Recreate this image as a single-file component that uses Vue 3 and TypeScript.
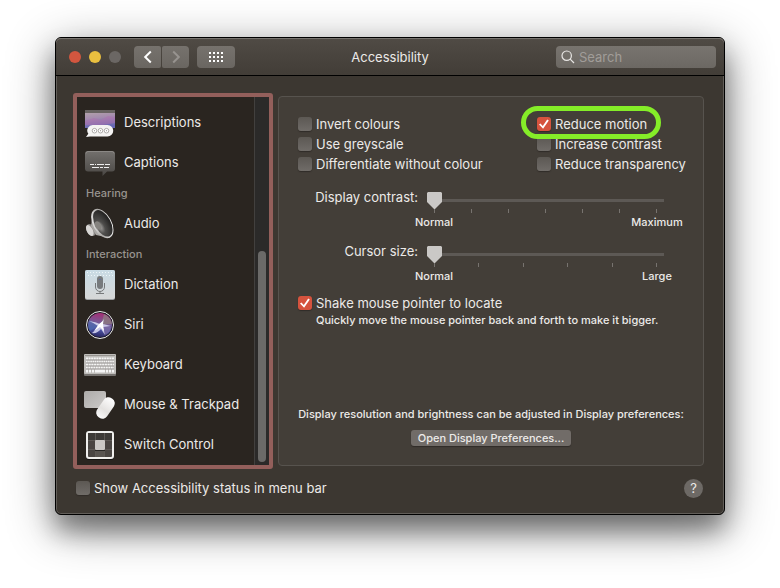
<script setup lang="ts">
import { ref } from 'vue'

interface SidebarEntry {
  kind: 'item' | 'heading'
  label: string
  icon?: string
}

interface Option {
  id: string
  label: string
  checked: boolean
  highlighted?: boolean
}

interface Slider {
  id: string
  label: string
  value: number
  steps: number
  low: string
  high: string
}

const sidebar: SidebarEntry[] = [
  { kind: 'item', label: 'Descriptions', icon: 'descriptions' },
  { kind: 'item', label: 'Captions', icon: 'captions' },
  { kind: 'heading', label: 'Hearing' },
  { kind: 'item', label: 'Audio', icon: 'audio' },
  { kind: 'heading', label: 'Interaction' },
  { kind: 'item', label: 'Dictation', icon: 'dictation' },
  { kind: 'item', label: 'Siri', icon: 'siri' },
  { kind: 'item', label: 'Keyboard', icon: 'keyboard' },
  { kind: 'item', label: 'Mouse & Trackpad', icon: 'mouse' },
  { kind: 'item', label: 'Switch Control', icon: 'switch' },
]

const optionColumns = ref<Option[][]>([
  [
    { id: 'invert', label: 'Invert colours', checked: false },
    { id: 'greyscale', label: 'Use greyscale', checked: false },
    { id: 'differentiate', label: 'Differentiate without colour', checked: false },
  ],
  [
    { id: 'motion', label: 'Reduce motion', checked: true, highlighted: true },
    { id: 'contrast', label: 'Increase contrast', checked: false },
    { id: 'transparency', label: 'Reduce transparency', checked: false },
  ],
])

const sliders = ref<Slider[]>([
  { id: 'display-contrast', label: 'Display contrast:', value: 0, steps: 7, low: 'Normal', high: 'Maximum' },
  { id: 'cursor-size', label: 'Cursor size:', value: 0, steps: 6, low: 'Normal', high: 'Large' },
])

const shake = ref(true)
const showStatus = ref(false)
const query = ref('')
</script>

<template>
  <div class="desktop">
    <main class="window">
      <header class="titlebar">
        <div class="lights">
          <button class="light close" aria-label="Close"></button>
          <button class="light minimise" aria-label="Minimise"></button>
          <button class="light zoom" aria-label="Zoom" disabled></button>
        </div>
        <nav class="nav">
          <button class="tool back" aria-label="Back">
            <svg width="10" height="14" viewBox="0 0 10 14"><path d="M7.800 1.500 2.200 7l5.600 5.500" /></svg>
          </button>
          <button class="tool forward" aria-label="Forward">
            <svg width="10" height="14" viewBox="0 0 10 14"><path d="M2.200 1.500 7.800 7l-5.600 5.500" /></svg>
          </button>
        </nav>
        <button class="tool all" aria-label="Show all">
          <svg width="14" height="10" viewBox="0 0 14 10">
            <template v-for="r in 3" :key="r">
              <rect v-for="c in 4" :key="c" :x="(c - 1) * 4" :y="(r - 1) * 4" width="2" height="2" />
            </template>
          </svg>
        </button>
        <h1 class="title">Accessibility</h1>
        <label class="search">
          <svg width="14" height="14" viewBox="0 0 14 14"><circle cx="5.700" cy="5.700" r="4.700" /><path d="m9.200 9.200 3.800 3.800" /></svg>
          <input v-model="query" type="search" placeholder="Search" aria-label="Search" />
        </label>
      </header>

      <div class="content">
        <aside class="sidebar">
          <ul class="entries">
            <li v-for="entry in sidebar" :key="entry.label" :class="entry.kind">
              <template v-if="entry.kind === 'heading'">{{ entry.label }}</template>
              <a v-else href="#">
                <svg class="icon" width="32" height="32" viewBox="0 0 32 32" aria-hidden="true">
                  <g v-if="entry.icon === 'descriptions'">
                    <defs>
                      <linearGradient id="sky" x1="0" y1="0" x2="0.200" y2="1">
                        <stop offset="0" stop-color="#b8aaa8" />
                        <stop offset="0.500" stop-color="#a48bae" />
                        <stop offset="1" stop-color="#6667b4" />
                      </linearGradient>
                    </defs>
                    <rect x="1" y="4" width="30" height="18" fill="url(#sky)" />
                    <rect x="1" y="4" width="30" height="3" fill="#686361" />
                    <path d="M1 15 10 12l7 2 7-4 7 1v6l-12 2H1z" fill="#b06fae" opacity="0.500" />
                    <path d="M9.500 19h14a5.500 5.500 0 0 1 0 11.500H6L2 31l2.300-3.200A5.600 5.600 0 0 1 9.500 19z" fill="#f4f3f2" />
                    <g fill="#fff" stroke="#9b9896" stroke-width="0.800"><circle cx="10.500" cy="24.700" r="2.300" /><circle cx="16.500" cy="24.700" r="2.300" /><circle cx="22.500" cy="24.700" r="2.300" /></g>
                    <g fill="#9b9896"><circle cx="10.500" cy="24.700" r="0.600" /><circle cx="16.500" cy="24.700" r="0.600" /><circle cx="22.500" cy="24.700" r="0.600" /></g>
                  </g>
                  <g v-else-if="entry.icon === 'captions'">
                    <defs>
                      <linearGradient id="bubble" x1="0" y1="0" x2="0" y2="1">
                        <stop offset="0" stop-color="#73706d" />
                        <stop offset="1" stop-color="#4a4744" />
                      </linearGradient>
                    </defs>
                    <path d="M4 5h24a3 3 0 0 1 3 3v14.500a3 3 0 0 1-3 3h-5L18.500 30v-4.500H4a3 3 0 0 1-3-3V8a3 3 0 0 1 3-3z" fill="url(#bubble)" />
                    <path d="M2 7.500Q2.300 5.500 4 5.500h24q1.700 0 2 2" fill="none" stroke="#8b8885" />
                    <path d="M6 18.500h20" stroke="#eee" stroke-dasharray="4 1 1 1 7 1 5" />
                    <path d="M8 21.500h17" stroke="#eee" stroke-dasharray="7 1 3 1 5" />
                  </g>
                  <g v-else-if="entry.icon === 'audio'">
                    <defs>
                      <linearGradient id="rim" x1="0" y1="0" x2="1" y2="0.600">
                        <stop offset="0" stop-color="#fff" />
                        <stop offset="0.500" stop-color="#aaa8a5" />
                        <stop offset="1" stop-color="#f4f4f4" />
                      </linearGradient>
                      <radialGradient id="cone" cx="0.250" cy="0.580" r="0.700">
                        <stop offset="0" stop-color="#a5a3a1" />
                        <stop offset="0.350" stop-color="#4f4e4c" />
                        <stop offset="1" stop-color="#252423" />
                      </radialGradient>
                    </defs>
                    <ellipse cx="7" cy="23" rx="4.300" ry="6.500" transform="rotate(-28 7 23)" fill="#85827f" />
                    <ellipse cx="5.800" cy="23.500" rx="3" ry="6" transform="rotate(-28 5.800 23.500)" fill="#d8d6d4" />
                    <path d="M9 6 7 19l5 9 14 3z" fill="#a9a7a4" />
                    <ellipse cx="18.300" cy="16.500" rx="9.200" ry="16" transform="rotate(-29 18.300 16.500)" fill="url(#rim)" />
                    <ellipse cx="18.800" cy="16.300" rx="7.800" ry="14.400" transform="rotate(-29 18.800 16.300)" fill="url(#cone)" />
                    <ellipse cx="14" cy="18.500" rx="3" ry="4.500" transform="rotate(-29 14 18.500)" fill="#85837f" />
                  </g>
                  <g v-else-if="entry.icon === 'dictation'">
                    <defs>
                      <linearGradient id="pad" x1="0" y1="0" x2="0" y2="1">
                        <stop offset="0" stop-color="#c9dbe5" />
                        <stop offset="1" stop-color="#d6d7d7" />
                      </linearGradient>
                    </defs>
                    <rect x="1" y="2" width="30" height="30" rx="2" fill="#9b9fa2" />
                    <rect x="1" y="2" width="30" height="29" rx="2" fill="url(#pad)" />
                    <path d="M3 4.500h26M4 7.500h25" stroke="#edf5f8" stroke-dasharray="1 2" />
                    <rect x="13" y="8" width="6" height="13" rx="3" fill="#777a7d" />
                    <path d="M11.500 15v4a4.500 4.500 0 0 0 9 0v-4M16 23.500v2.500M12 25.500h8" fill="none" stroke="#77797b" />
                    <rect x="15.500" y="11" width="1" height="1" fill="#4f63b9" />
                  </g>
                  <g v-else-if="entry.icon === 'siri'">
                    <defs>
                      <linearGradient id="orb" x1="0.500" y1="0" x2="0.350" y2="1">
                        <stop offset="0" stop-color="#a42d72" />
                        <stop offset="0.360" stop-color="#7a5694" />
                        <stop offset="0.700" stop-color="#4950a0" />
                        <stop offset="1" stop-color="#292660" />
                      </linearGradient>
                    </defs>
                    <circle cx="16" cy="17" r="13.500" fill="#181620" stroke="#ededed" />
                    <circle cx="16" cy="17" r="12" fill="url(#orb)" />
                    <path d="M17 17 20 6q7 3 8 10z" fill="#8c7b80" opacity="0.800" />
                    <path d="M16 17 5 12q-2 7 1 11z" fill="#4b78b8" opacity="0.500" />
                    <path d="M17 17l10 2q-1 6-6 8z" fill="#8a76aa" opacity="0.600" />
                    <path d="M5 13q7 1 11 3l4-5-1 5 8 2-8 1q1 4 2 8l-4-6q-4 5-9 4 4-3 6-7-4-3-9-5z" fill="#dcdcf4" opacity="0.850" />
                    <path d="M10 23l5-7 4-3v4l1 6-4-4z" fill="#fff" />
                  </g>
                  <g v-else-if="entry.icon === 'keyboard'">
                    <rect x="0" y="7" width="32" height="21" rx="1" fill="#777471" />
                    <rect x="0" y="6" width="32" height="20" rx="1" fill="#bfbdba" />
                    <path d="M1 7.500h30" stroke="#96938f" />
                    <g stroke="#f5f5f5" stroke-width="2">
                      <path d="M2 10.500h28" stroke-dasharray="2 0.600" />
                      <path d="M2 13.500h28" stroke-dasharray="1.500 0.700" />
                      <path d="M2 16.500h28" stroke-dasharray="2 0.700" />
                      <path d="M2 19.500h28" stroke-dasharray="1.700 0.800" />
                      <path d="M2 23h28" stroke-width="3" stroke-dasharray="2 1 2 1 2 1 10 1 2 1 2 1 2" />
                    </g>
                    <path d="M2 12h28M2 15h28M2 18h28M2 21h28" stroke="#85827f" stroke-width="0.600" />
                  </g>
                  <g v-else-if="entry.icon === 'mouse'">
                    <defs>
                      <linearGradient id="trackpad" x1="0" y1="0" x2="1" y2="1">
                        <stop offset="0" stop-color="#adaba9" />
                        <stop offset="1" stop-color="#cccac8" />
                      </linearGradient>
                      <linearGradient id="shell" x1="0" y1="0" x2="0" y2="1">
                        <stop offset="0" stop-color="#ffffff" />
                        <stop offset="0.600" stop-color="#e4e2e0" />
                        <stop offset="1" stop-color="#fafafa" />
                      </linearGradient>
                    </defs>
                    <rect x="0" y="3" width="22" height="17" rx="2" fill="url(#trackpad)" />
                    <rect x="15.500" y="8.500" width="12" height="23" rx="5.500" transform="rotate(34 21.500 20)" fill="url(#shell)" />
                  </g>
                  <g v-else>
                    <rect x="2" y="3" width="28" height="29" rx="3" fill="#141312" />
                    <rect x="3" y="4" width="26" height="26" rx="2" fill="#4a4643" stroke="#f0efed" stroke-width="2" />
                    <path d="M4 5h24v7H4z" fill="#3d3a37" />
                    <path d="M11.500 5v24M20.500 5v24M4 12.500h24M4 21.500h24" stroke="#5d5955" />
                    <path d="M12 22h8v7h-8z" fill="#595551" />
                    <rect x="11" y="13" width="10" height="10" fill="#2a2826" />
                    <rect x="11" y="12" width="10" height="10" rx="1" fill="#cbc9c6" />
                  </g>
                </svg>
                <span>{{ entry.label }}</span>
              </a>
            </li>
          </ul>
          <div class="scrollbar"><div class="scroll-thumb"></div></div>
        </aside>

        <section class="panel">
          <div class="options">
            <div v-for="(column, i) in optionColumns" :key="i" class="option-column">
              <label
                v-for="option in column"
                :key="option.id"
                class="check"
                :class="{ highlighted: option.highlighted }"
              >
                <input v-model="option.checked" type="checkbox" />
                <span>{{ option.label }}</span>
              </label>
            </div>
          </div>

          <div class="sliders">
            <div v-for="slider in sliders" :key="slider.id" class="slider-row">
              <label :for="slider.id">{{ slider.label }}</label>
              <div class="slider">
                <input :id="slider.id" v-model.number="slider.value" type="range" min="0" :max="slider.steps - 1" />
                <div class="ticks"><i v-for="n in slider.steps" :key="n"></i></div>
                <div class="range-labels">
                  <span>{{ slider.low }}</span>
                  <span>{{ slider.high }}</span>
                </div>
              </div>
            </div>
          </div>

          <div class="shake">
            <label class="check"><input v-model="shake" type="checkbox" /><span>Shake mouse pointer to locate</span></label>
            <p>Quickly move the mouse pointer back and forth to make it bigger.</p>
          </div>

          <div class="display-note">
            <p>Display resolution and brightness can be adjusted in Display preferences:</p>
            <button class="open">Open Display Preferences...</button>
          </div>
        </section>
      </div>

      <footer class="footer">
        <label class="check"><input v-model="showStatus" type="checkbox" /><span>Show Accessibility status in menu bar</span></label>
        <button class="help" aria-label="Help">?</button>
      </footer>
    </main>
  </div>
</template>

<style>
body {
  background: #fff;
}
</style>

<style scoped>
* {
  box-sizing: border-box;
}

.desktop {
  min-height: 100vh;
  padding: 37px 55px 73px;
  overflow: hidden;
  color: #eceae8;
  font: 400 13px/20px Inter, "Liberation Sans", sans-serif;
}

button,
input {
  margin: 0;
  padding: 0;
  border: 0;
  color: inherit;
  font: inherit;
}

p,
ul,
h1 {
  margin: 0;
  padding: 0;
}

.window {
  border: 1px solid #000;
  border-radius: 6px;
  background: #3c3731;
  box-shadow:
    inset 0 0 0 1px #625e59,
    0 16px 24px rgba(0, 0, 0, 0.35),
    0 12px 48px rgba(0, 0, 0, 0.45);
}

.titlebar {
  display: grid;
  grid-template-columns: auto auto auto 1fr auto;
  align-items: center;
  position: relative;
  height: 38px;
  padding: 0 8px 0 13px;
  border-bottom: 1px solid #000;
  border-radius: 5px 5px 0 0;
  background: linear-gradient(#504b45, #423d37);
  box-shadow: inset 0 1px #77736e;
}

.lights {
  display: flex;
  gap: 8px;
  margin-right: 13px;
}

.light {
  width: 12px;
  height: 12px;
  border-radius: 50%;
}

.close {
  background: #d2563f;
}

.minimise {
  background: #e9bf3f;
}

.zoom {
  background: #6b6764;
}

.nav {
  display: flex;
  gap: 1px;
  margin-right: 8px;
}

.tool {
  display: grid;
  place-items: center;
  width: 27px;
  height: 22px;
  border-radius: 4px;
  background: linear-gradient(#76726d, #6a6661);
}

.back {
  border-radius: 4px 2px 2px 4px;
}

.forward {
  border-radius: 2px 4px 4px 2px;
}

.nav path {
  fill: none;
  stroke: #fff;
  stroke-width: 2;
}

.forward path {
  stroke: #97938f;
}

.all {
  width: 38px;
}

.all rect {
  fill: #fff;
}

.title {
  position: absolute;
  left: 0;
  right: 0;
  text-align: center;
  font-size: 13px;
  font-weight: 400;
  pointer-events: none;
}

.search {
  display: flex;
  grid-column: 5;
  align-items: center;
  gap: 4px;
  width: 160px;
  height: 22px;
  padding: 0 5px;
  border-radius: 4px;
  background: linear-gradient(#78746f, #6c6863);
}

.search svg {
  flex: none;
  fill: none;
  stroke: #e8e6e4;
  stroke-width: 1.2;
}

.search input {
  width: 100%;
  min-width: 0;
  outline: 0;
  background: none;
  appearance: none;
}

.search input::placeholder {
  color: #a19d99;
  opacity: 1;
}

.content {
  display: flex;
  gap: 5px;
  padding: 17px 20px 0 17px;
}

.sidebar {
  display: flex;
  flex: none;
  width: 200px;
  border: 4px solid #935f5b;
  border-radius: 3px;
  background: #2a2520;
}

.entries {
  flex: 1;
  padding: 5px 0 1px 7px;
  list-style: none;
}

.item a {
  display: flex;
  align-items: center;
  gap: 8px;
  height: 40px;
  color: inherit;
  text-decoration: none;
  white-space: nowrap;
}

.icon {
  flex: none;
}

.heading {
  height: 21px;
  padding-left: 2px;
  color: #98948f;
  font-size: 11px;
  font-weight: 500;
  line-height: 23px;
}

.scrollbar {
  display: flex;
  flex-direction: column;
  justify-content: flex-end;
  width: 15px;
  padding: 3px;
  border-left: 1px solid #42403e;
  background: #2b2a29;
}

.scroll-thumb {
  height: 211px;
  border-radius: 4px;
  background: #6b6a68;
}

.panel {
  display: flex;
  flex: 1;
  flex-direction: column;
  min-width: 0;
  margin: 3px 0;
  padding: 17px 19px 19px;
  border: 1px solid #57534e;
  border-radius: 4px;
  background: #433e38;
}

.options {
  display: grid;
  grid-template-columns: 1fr 147px;
}

.check {
  display: flex;
  align-items: center;
  gap: 4px;
  width: max-content;
  height: 20px;
  white-space: nowrap;
}

.check input {
  width: 14px;
  height: 14px;
  border-radius: 3px;
  background: linear-gradient(#5c5853, #706c68);
  box-shadow: 0 1px 1px #302c28;
  appearance: none;
}

.check input:checked {
  display: grid;
  place-items: center;
  background: #d5533e;
}

.check input:checked::before {
  width: 10px;
  height: 10px;
  background: #fff;
  clip-path: polygon(0 56%, 14% 44%, 38% 70%, 82% 4%, 98% 15%, 41% 98%);
  content: "";
}

.highlighted {
  position: relative;
}

.highlighted::after {
  position: absolute;
  inset: -8px -14px -5px -16px;
  border: 5px solid #85ed28;
  border-radius: 17px;
  content: "";
  pointer-events: none;
}

.sliders {
  padding-top: 13px;
}

.slider-row {
  display: grid;
  grid-template-columns: 120px 1fr;
  gap: 9px;
  height: 54px;
  padding-right: 20px;
}

.slider-row > label {
  text-align: right;
  white-space: nowrap;
}

.slider {
  min-width: 0;
  padding-top: 5px;
}

.slider input {
  display: block;
  width: 100%;
  height: 17px;
  background: linear-gradient(#5d5955, #5d5955) center / 100% 3px no-repeat;
  appearance: none;
}

.slider input::-webkit-slider-thumb {
  width: 15px;
  height: 17px;
  background: #cac8c6;
  clip-path: polygon(0 1px, 1px 0, 14px 0, 100% 1px, 100% 10px, 8px 100%, 7px 100%, 0 10px);
  appearance: none;
}

.ticks {
  display: flex;
  justify-content: space-between;
  height: 4px;
  margin: 0 7px;
}

.ticks i {
  width: 1px;
  background: #77736f;
}

.range-labels {
  display: flex;
  justify-content: space-between;
  margin: 0 -20px;
  font-size: 11px;
  font-weight: 500;
  line-height: 18px;
}

.range-labels span {
  width: 54px;
  text-align: center;
}

.shake {
  margin-top: -2px;
}

.shake p {
  padding-left: 18px;
  font-size: 11px;
  font-weight: 500;
  line-height: 15px;
}

.display-note {
  display: flex;
  flex-direction: column;
  align-items: center;
  gap: 8px;
  margin-top: auto;
  font-size: 11px;
  font-weight: 500;
  line-height: 16px;
  white-space: nowrap;
}

.open {
  width: 160px;
  height: 16px;
  border-radius: 3px;
  background: #716c68;
  box-shadow: 0 1px 1px #302c28;
}

.footer {
  display: flex;
  align-items: center;
  justify-content: space-between;
  height: 45px;
  padding: 0 21px 7px 20px;
}

.help {
  width: 19px;
  height: 19px;
  border-radius: 50%;
  background: #6d6965;
  line-height: 19px;
}
</style>
